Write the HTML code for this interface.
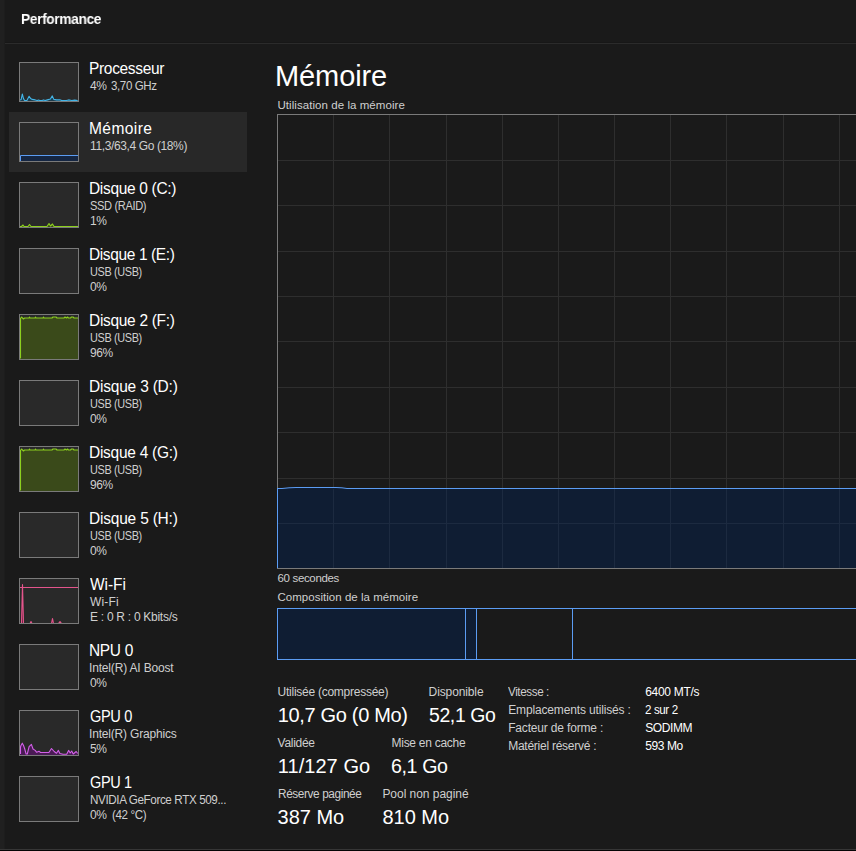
<!DOCTYPE html><html><head><meta charset="utf-8"><style>
html,body{margin:0;padding:0;width:856px;height:851px;overflow:hidden;background:#1a1a1a;}
body{position:relative;font-family:"Liberation Sans", sans-serif;}
.t{position:absolute;white-space:nowrap;line-height:1;}
.a{position:absolute;}
</style></head><body>

<div class="a" style="left:0;top:0;width:4px;height:851px;background:#202020"></div>
<div class="a" style="left:4px;top:0;width:1px;height:851px;background:#1d1d1d"></div>
<div class="a" style="left:5px;top:42px;width:851px;height:1px;background:#171717"></div>
<div class="a" style="left:5px;top:43px;width:851px;height:1px;background:#2b2b2b"></div>
<div class="a" style="left:0;top:849px;width:856px;height:1px;background:#363636"></div>
<div class="a" style="left:0;top:850px;width:856px;height:1px;background:#050505"></div>
<div class="a" style="left:9px;top:112px;width:238px;height:60px;background:#282828"></div>
<div class="a" style="left:19px;top:62px;width:58px;height:38px;border:1px solid #7a7a7a;background:#292929"></div><svg class="a" style="left:20px;top:63px" width="58" height="38" viewBox="0 0 58 38"><polygon points="0,38 0.0,37.1 1.2,36.4 2.3,31.0 3.5,35.6 4.6,37.5 6.9,37.5 9.1,33.3 10.7,35.6 12.2,36.4 15.2,36.9 17.1,37.5 18.6,37.1 19.8,37.6 22.0,37.6 23.6,36.9 25.1,37.6 27.4,36.9 30.4,36.0 32.3,32.9 33.8,36.4 36.5,36.9 40.3,36.9 41.8,37.6 46.4,37.6 48.6,36.9 51.7,37.5 54.7,37.1 57.7,37.5 57.7,38" fill="#1b3d4e"/><polyline points="0.0,37.1 1.2,36.4 2.3,31.0 3.5,35.6 4.6,37.5 6.9,37.5 9.1,33.3 10.7,35.6 12.2,36.4 15.2,36.9 17.1,37.5 18.6,37.1 19.8,37.6 22.0,37.6 23.6,36.9 25.1,37.6 27.4,36.9 30.4,36.0 32.3,32.9 33.8,36.4 36.5,36.9 40.3,36.9 41.8,37.6 46.4,37.6 48.6,36.9 51.7,37.5 54.7,37.1 57.7,37.5" fill="none" stroke="#42b4e6" stroke-width="1.1" stroke-linejoin="round"/></svg>
<div class="a" style="left:19px;top:122px;width:58px;height:38px;border:1px solid #7a7a7a;background:#292929"></div><svg class="a" style="left:20px;top:123px" width="58" height="38" viewBox="0 0 58 38"><rect x="0" y="32" width="58" height="6" fill="#152642"/><polyline points="0.5,38 0.5,32.5 58,32.5" fill="none" stroke="#5b9cf3" stroke-width="1"/></svg>
<div class="a" style="left:19px;top:182px;width:58px;height:44px;border:1px solid #7a7a7a;background:#292929"></div><svg class="a" style="left:20px;top:183px" width="58" height="44" viewBox="0 0 58 44"><polygon points="0,44 0.0,43.5 1.5,43.5 3.0,42.0 4.0,43.5 8.0,43.5 9.5,41.5 11.0,43.5 18.0,43.5 20.0,43.5 25.0,43.5 27.0,43.5 29.0,40.5 30.5,43.0 32.5,41.0 34.0,43.5 40.0,43.5 58.0,43.5 58.0,44" fill="#3a4a1a"/><polyline points="0.0,43.5 1.5,43.5 3.0,42.0 4.0,43.5 8.0,43.5 9.5,41.5 11.0,43.5 18.0,43.5 20.0,43.5 25.0,43.5 27.0,43.5 29.0,40.5 30.5,43.0 32.5,41.0 34.0,43.5 40.0,43.5 58.0,43.5" fill="none" stroke="#8ccf1e" stroke-width="1.1" stroke-linejoin="round"/></svg>
<div class="a" style="left:19px;top:248px;width:58px;height:44px;border:1px solid #7a7a7a;background:#292929"></div><svg class="a" style="left:20px;top:249px" width="58" height="44" viewBox="0 0 58 44"></svg>
<div class="a" style="left:19px;top:314px;width:58px;height:44px;border:1px solid #7a7a7a;background:#292929"></div><svg class="a" style="left:20px;top:315px" width="58" height="44" viewBox="0 0 58 44"><polygon points="0,44 0.5,43.5 0.5,3.5 1.5,2.0 3.5,4.0 4.5,3.0 9.0,3.0 9.5,2.0 10.0,3.0 15.0,3.0 15.5,2.0 16.0,3.0 23.0,3.0 23.5,2.0 24.0,3.0 32.0,3.0 33.0,2.0 36.0,2.0 37.0,3.0 44.0,3.0 45.0,2.0 46.5,3.0 47.5,2.0 48.5,3.0 50.5,3.0 51.5,2.0 53.0,2.0 54.0,3.0 58.0,3.0 58.0,44" fill="#3a4a1a"/><polyline points="0.5,43.5 0.5,3.5 1.5,2.0 3.5,4.0 4.5,3.0 9.0,3.0 9.5,2.0 10.0,3.0 15.0,3.0 15.5,2.0 16.0,3.0 23.0,3.0 23.5,2.0 24.0,3.0 32.0,3.0 33.0,2.0 36.0,2.0 37.0,3.0 44.0,3.0 45.0,2.0 46.5,3.0 47.5,2.0 48.5,3.0 50.5,3.0 51.5,2.0 53.0,2.0 54.0,3.0 58.0,3.0" fill="none" stroke="#8ccf1e" stroke-width="1.1" stroke-linejoin="round"/></svg>
<div class="a" style="left:19px;top:380px;width:58px;height:44px;border:1px solid #7a7a7a;background:#292929"></div><svg class="a" style="left:20px;top:381px" width="58" height="44" viewBox="0 0 58 44"></svg>
<div class="a" style="left:19px;top:446px;width:58px;height:44px;border:1px solid #7a7a7a;background:#292929"></div><svg class="a" style="left:20px;top:447px" width="58" height="44" viewBox="0 0 58 44"><polygon points="0,44 0.5,43.5 0.5,3.5 1.5,2.0 3.5,4.0 4.5,3.0 9.0,3.0 9.5,2.0 10.0,3.0 15.0,3.0 15.5,2.0 16.0,3.0 23.0,3.0 23.5,2.0 24.0,3.0 32.0,3.0 33.0,2.0 36.0,2.0 37.0,3.0 44.0,3.0 45.0,2.0 46.5,3.0 47.5,2.0 48.5,3.0 50.5,3.0 51.5,2.0 53.0,2.0 54.0,3.0 58.0,3.0 58.0,44" fill="#3a4a1a"/><polyline points="0.5,43.5 0.5,3.5 1.5,2.0 3.5,4.0 4.5,3.0 9.0,3.0 9.5,2.0 10.0,3.0 15.0,3.0 15.5,2.0 16.0,3.0 23.0,3.0 23.5,2.0 24.0,3.0 32.0,3.0 33.0,2.0 36.0,2.0 37.0,3.0 44.0,3.0 45.0,2.0 46.5,3.0 47.5,2.0 48.5,3.0 50.5,3.0 51.5,2.0 53.0,2.0 54.0,3.0 58.0,3.0" fill="none" stroke="#8ccf1e" stroke-width="1.1" stroke-linejoin="round"/></svg>
<div class="a" style="left:19px;top:512px;width:58px;height:44px;border:1px solid #7a7a7a;background:#292929"></div><svg class="a" style="left:20px;top:513px" width="58" height="44" viewBox="0 0 58 44"></svg>
<div class="a" style="left:19px;top:578px;width:58px;height:44px;border:1px solid #7a7a7a;background:#292929"></div><svg class="a" style="left:20px;top:579px" width="58" height="44" viewBox="0 0 58 44"><polyline points="0,8.5 58,8.5" fill="none" stroke="#e4558c" stroke-width="1"/><polygon points="0,44 0.0,44.5 1.5,44.5 2.5,5.5 3.5,44.5 4.5,44.5 10.0,44.5 11.0,42.5 12.0,44.5 31.5,44.5 32.5,39.5 33.5,44.5 38.5,44.5 40.0,42.5 41.5,44.5 58.0,44.5 58.0,44" fill="#5a2035"/><polyline points="0.0,44.5 1.5,44.5 2.5,5.5 3.5,44.5 4.5,44.5 10.0,44.5 11.0,42.5 12.0,44.5 31.5,44.5 32.5,39.5 33.5,44.5 38.5,44.5 40.0,42.5 41.5,44.5 58.0,44.5" fill="none" stroke="#e4558c" stroke-width="1.1" stroke-linejoin="round"/></svg>
<div class="a" style="left:19px;top:644px;width:58px;height:44px;border:1px solid #7a7a7a;background:#292929"></div><svg class="a" style="left:20px;top:645px" width="58" height="44" viewBox="0 0 58 44"></svg>
<div class="a" style="left:19px;top:710px;width:58px;height:44px;border:1px solid #7a7a7a;background:#292929"></div><svg class="a" style="left:20px;top:711px" width="58" height="44" viewBox="0 0 58 44"><polygon points="0,44 0.5,43.0 0.5,36.0 1.0,34.5 2.3,32.2 3.5,34.5 4.6,37.5 6.1,43.0 7.3,43.0 9.1,35.6 11.4,33.4 13.0,38.0 15.2,39.4 16.7,41.3 19.0,40.2 20.5,41.5 28.9,41.5 31.5,37.5 34.2,40.5 36.5,42.2 38.4,39.4 39.9,42.5 43.0,43.2 46.7,43.2 48.6,39.4 50.2,42.0 51.7,40.0 53.2,43.0 56.2,40.5 57.7,42.5 57.7,44" fill="#4a1a55"/><polyline points="0.5,43.0 0.5,36.0 1.0,34.5 2.3,32.2 3.5,34.5 4.6,37.5 6.1,43.0 7.3,43.0 9.1,35.6 11.4,33.4 13.0,38.0 15.2,39.4 16.7,41.3 19.0,40.2 20.5,41.5 28.9,41.5 31.5,37.5 34.2,40.5 36.5,42.2 38.4,39.4 39.9,42.5 43.0,43.2 46.7,43.2 48.6,39.4 50.2,42.0 51.7,40.0 53.2,43.0 56.2,40.5 57.7,42.5" fill="none" stroke="#d260e8" stroke-width="1.1" stroke-linejoin="round"/></svg>
<div class="a" style="left:19px;top:776px;width:58px;height:44px;border:1px solid #7a7a7a;background:#292929"></div><svg class="a" style="left:20px;top:777px" width="58" height="44" viewBox="0 0 58 44"></svg>
<svg class="a" style="left:0;top:0" width="856" height="851" viewBox="0 0 856 851" shape-rendering="crispEdges"><rect x="278" y="160" width="578" height="1" fill="#2e2e2e"/><rect x="278" y="205" width="578" height="1" fill="#2e2e2e"/><rect x="278" y="251" width="578" height="1" fill="#2e2e2e"/><rect x="278" y="296" width="578" height="1" fill="#2e2e2e"/><rect x="278" y="341" width="578" height="1" fill="#2e2e2e"/><rect x="278" y="387" width="578" height="1" fill="#2e2e2e"/><rect x="278" y="432" width="578" height="1" fill="#2e2e2e"/><rect x="278" y="478" width="578" height="1" fill="#2e2e2e"/><rect x="278" y="523" width="578" height="1" fill="#2e2e2e"/><rect x="333" y="115" width="1" height="453" fill="#2e2e2e"/><rect x="389" y="115" width="1" height="453" fill="#2e2e2e"/><rect x="446" y="115" width="1" height="453" fill="#2e2e2e"/><rect x="502" y="115" width="1" height="453" fill="#2e2e2e"/><rect x="558" y="115" width="1" height="453" fill="#2e2e2e"/><rect x="614" y="115" width="1" height="453" fill="#2e2e2e"/><rect x="670" y="115" width="1" height="453" fill="#2e2e2e"/><rect x="726" y="115" width="1" height="453" fill="#2e2e2e"/><rect x="783" y="115" width="1" height="453" fill="#2e2e2e"/><rect x="839" y="115" width="1" height="453" fill="#2e2e2e"/></svg>
<svg class="a" style="left:0;top:0" width="856" height="851" viewBox="0 0 856 851"><polygon points="277,568 277.5,488.5 282,488.5 289,487.8 296,487.5 336,487.5 342,487.8 347,488.5 856,488.5 856,568" fill="#0f1d33"/></svg>
<svg class="a" style="left:0;top:0" width="856" height="851" viewBox="0 0 856 851" shape-rendering="crispEdges"><rect x="278" y="523" width="578" height="1" fill="#1c2a40"/><rect x="333" y="489" width="1" height="79" fill="#1c2a40"/><rect x="389" y="489" width="1" height="79" fill="#1c2a40"/><rect x="446" y="489" width="1" height="79" fill="#1c2a40"/><rect x="502" y="489" width="1" height="79" fill="#1c2a40"/><rect x="558" y="489" width="1" height="79" fill="#1c2a40"/><rect x="614" y="489" width="1" height="79" fill="#1c2a40"/><rect x="670" y="489" width="1" height="79" fill="#1c2a40"/><rect x="726" y="489" width="1" height="79" fill="#1c2a40"/><rect x="783" y="489" width="1" height="79" fill="#1c2a40"/><rect x="839" y="489" width="1" height="79" fill="#1c2a40"/><rect x="277" y="114" width="579" height="1" fill="#7a7a7a"/><rect x="277" y="114" width="1" height="374" fill="#7a7a7a"/><rect x="277" y="488" width="1" height="80" fill="#5b9cf3"/><rect x="277" y="568" width="579" height="1" fill="#7a7a7a"/></svg>
<svg class="a" style="left:0;top:0" width="856" height="851" viewBox="0 0 856 851"><polyline points="277.5,488.5 282,488.5 289,487.8 296,487.5 336,487.5 342,487.8 347,488.5 856,488.5" fill="none" stroke="#5b9cf3" stroke-width="1"/></svg>
<div class="a" style="left:277px;top:608px;width:579px;height:52px;box-sizing:border-box;border:1px solid #5b9cf3;border-right:none;"></div>
<div class="a" style="left:278px;top:609px;width:187px;height:50px;background:#0f1d33"></div>
<div class="a" style="left:466px;top:609px;width:10px;height:50px;background:#0f1d33"></div>
<div class="a" style="left:465px;top:609px;width:1px;height:50px;background:#5b9cf3"></div>
<div class="a" style="left:476px;top:609px;width:1px;height:50px;background:#5b9cf3"></div>
<div class="a" style="left:572px;top:609px;width:1px;height:50px;background:#5b9cf3"></div>
<div class="t" style="left:21.00px;top:12px;font-size:14.5px;color:#ffffff;font-weight:700;letter-spacing:-0.400px;transform:scale(0.9505,1.0);transform-origin:0 12px;will-change:transform">Performance</div>
<div class="t" style="left:89.00px;top:61px;font-size:15.5px;color:#ffffff;font-weight:400;letter-spacing:-0.326px;transform:scale(1.0000,1.07);transform-origin:0 13px">Processeur</div>
<div class="t" style="left:89.00px;top:121px;font-size:15.5px;color:#ffffff;font-weight:400;letter-spacing:0.400px;transform:scale(1.0038,1.07);transform-origin:0 13px">Mémoire</div>
<div class="t" style="left:90.00px;top:140px;font-size:12px;color:#cfcfcf;font-weight:400;letter-spacing:-0.379px">11,3/63,4 Go (18%)</div>
<div class="t" style="left:89.00px;top:181px;font-size:15.5px;color:#ffffff;font-weight:400;letter-spacing:-0.320px;transform:scale(1.0000,1.07);transform-origin:0 13px">Disque 0 (C:)</div>
<div class="t" style="left:90.00px;top:200px;font-size:12px;color:#cfcfcf;font-weight:400;letter-spacing:-0.400px;transform:scale(0.9251,1.0);transform-origin:0 10px">SSD (RAID)</div>
<div class="t" style="left:90.00px;top:215px;font-size:12px;color:#cfcfcf;font-weight:400;letter-spacing:-0.400px">1%</div>
<div class="t" style="left:89.00px;top:247px;font-size:15.5px;color:#ffffff;font-weight:400;letter-spacing:-0.382px;transform:scale(1.0000,1.07);transform-origin:0 13px">Disque 1 (E:)</div>
<div class="t" style="left:90.00px;top:266px;font-size:12px;color:#cfcfcf;font-weight:400;letter-spacing:-0.400px;transform:scale(0.9082,1.0);transform-origin:0 10px">USB (USB)</div>
<div class="t" style="left:90.00px;top:281px;font-size:12px;color:#cfcfcf;font-weight:400;letter-spacing:-0.400px">0%</div>
<div class="t" style="left:89.00px;top:313px;font-size:15.5px;color:#ffffff;font-weight:400;letter-spacing:-0.310px;transform:scale(1.0000,1.07);transform-origin:0 13px">Disque 2 (F:)</div>
<div class="t" style="left:90.00px;top:332px;font-size:12px;color:#cfcfcf;font-weight:400;letter-spacing:-0.400px;transform:scale(0.9082,1.0);transform-origin:0 10px">USB (USB)</div>
<div class="t" style="left:90.00px;top:347px;font-size:12px;color:#cfcfcf;font-weight:400;letter-spacing:-0.400px">96%</div>
<div class="t" style="left:89.00px;top:379px;font-size:15.5px;color:#ffffff;font-weight:400;letter-spacing:-0.204px;transform:scale(1.0000,1.07);transform-origin:0 13px">Disque 3 (D:)</div>
<div class="t" style="left:90.00px;top:398px;font-size:12px;color:#cfcfcf;font-weight:400;letter-spacing:-0.400px;transform:scale(0.9082,1.0);transform-origin:0 10px">USB (USB)</div>
<div class="t" style="left:90.00px;top:413px;font-size:12px;color:#cfcfcf;font-weight:400;letter-spacing:-0.400px">0%</div>
<div class="t" style="left:89.00px;top:445px;font-size:15.5px;color:#ffffff;font-weight:400;letter-spacing:-0.275px;transform:scale(1.0000,1.07);transform-origin:0 13px">Disque 4 (G:)</div>
<div class="t" style="left:90.00px;top:464px;font-size:12px;color:#cfcfcf;font-weight:400;letter-spacing:-0.400px;transform:scale(0.9082,1.0);transform-origin:0 10px">USB (USB)</div>
<div class="t" style="left:90.00px;top:479px;font-size:12px;color:#cfcfcf;font-weight:400;letter-spacing:-0.400px">96%</div>
<div class="t" style="left:89.00px;top:511px;font-size:15.5px;color:#ffffff;font-weight:400;letter-spacing:-0.204px;transform:scale(1.0000,1.07);transform-origin:0 13px">Disque 5 (H:)</div>
<div class="t" style="left:90.00px;top:530px;font-size:12px;color:#cfcfcf;font-weight:400;letter-spacing:-0.400px;transform:scale(0.9082,1.0);transform-origin:0 10px">USB (USB)</div>
<div class="t" style="left:90.00px;top:545px;font-size:12px;color:#cfcfcf;font-weight:400;letter-spacing:-0.400px">0%</div>
<div class="t" style="left:90.00px;top:577px;font-size:15.5px;color:#ffffff;font-weight:400;letter-spacing:-0.051px;transform:scale(1.0000,1.07);transform-origin:0 13px">Wi-Fi</div>
<div class="t" style="left:90.00px;top:596px;font-size:12px;color:#cfcfcf;font-weight:400;letter-spacing:0.145px">Wi-Fi</div>
<div class="t" style="left:90.00px;top:611px;font-size:12px;color:#cfcfcf;font-weight:400;letter-spacing:-0.278px">E : 0 R : 0 Kbits/s</div>
<div class="t" style="left:89.00px;top:643px;font-size:15.5px;color:#ffffff;font-weight:400;letter-spacing:-0.333px;transform:scale(1.0000,1.07);transform-origin:0 13px">NPU 0</div>
<div class="t" style="left:89.00px;top:662px;font-size:12px;color:#cfcfcf;font-weight:400;letter-spacing:-0.169px">Intel(R) AI Boost</div>
<div class="t" style="left:90.00px;top:677px;font-size:12px;color:#cfcfcf;font-weight:400;letter-spacing:-0.400px">0%</div>
<div class="t" style="left:90.00px;top:709px;font-size:15.5px;color:#ffffff;font-weight:400;letter-spacing:-0.400px;transform:scale(0.9427,1.07);transform-origin:0 13px">GPU 0</div>
<div class="t" style="left:89.00px;top:728px;font-size:12px;color:#cfcfcf;font-weight:400;letter-spacing:-0.181px">Intel(R) Graphics</div>
<div class="t" style="left:90.00px;top:743px;font-size:12px;color:#cfcfcf;font-weight:400;letter-spacing:-0.400px">5%</div>
<div class="t" style="left:90.00px;top:775px;font-size:15.5px;color:#ffffff;font-weight:400;letter-spacing:-0.400px;transform:scale(0.9369,1.07);transform-origin:0 13px">GPU 1</div>
<div class="t" style="left:90.00px;top:794px;font-size:12px;color:#cfcfcf;font-weight:400;letter-spacing:-0.400px;transform:scale(0.9725,1.0);transform-origin:0 10px">NVIDIA GeForce RTX 509...</div>
<div class="t" style="left:90.00px;top:80px;font-size:12px;color:#cfcfcf;font-weight:400;letter-spacing:-0.400px">4%</div>
<div class="t" style="left:111.00px;top:80px;font-size:12px;color:#cfcfcf;font-weight:400;letter-spacing:-0.400px;transform:scale(0.9626,1.0);transform-origin:0 10px">3,70 GHz</div>
<div class="t" style="left:90.00px;top:809px;font-size:12px;color:#cfcfcf;font-weight:400;letter-spacing:-0.400px">0%</div>
<div class="t" style="left:111.90px;top:809px;font-size:12px;color:#cfcfcf;font-weight:400;letter-spacing:-0.400px;transform:scale(0.9680,1.0);transform-origin:0 10px">(42 °C)</div>
<div class="t" style="left:275.00px;top:62px;font-size:29px;color:#ffffff;font-weight:400;letter-spacing:-0.095px">Mémoire</div>
<div class="t" style="left:277.50px;top:100px;font-size:11.5px;color:#cfcfcf;font-weight:400;letter-spacing:0.058px">Utilisation de la mémoire</div>
<div class="t" style="left:277.50px;top:573px;font-size:11.5px;color:#cfcfcf;font-weight:400;letter-spacing:-0.337px">60 secondes</div>
<div class="t" style="left:277.50px;top:592px;font-size:11.5px;color:#cfcfcf;font-weight:400;letter-spacing:0.026px">Composition de la mémoire</div>
<div class="t" style="left:277.60px;top:686px;font-size:12px;color:#cfcfcf;font-weight:400;letter-spacing:-0.257px">Utilisée (compressée)</div>
<div class="t" style="left:277.80px;top:705px;font-size:20px;color:#ffffff;font-weight:400;letter-spacing:-0.334px">10,7 Go (0 Mo)</div>
<div class="t" style="left:428.60px;top:686px;font-size:12px;color:#cfcfcf;font-weight:400;letter-spacing:-0.118px">Disponible</div>
<div class="t" style="left:428.60px;top:705px;font-size:20px;color:#ffffff;font-weight:400;letter-spacing:-0.400px;transform:scale(0.9732,1.0);transform-origin:0 17px">52,1 Go</div>
<div class="t" style="left:277.60px;top:737px;font-size:12px;color:#cfcfcf;font-weight:400;letter-spacing:-0.294px">Validée</div>
<div class="t" style="left:277.80px;top:756px;font-size:20px;color:#ffffff;font-weight:400;letter-spacing:0.050px">11/127 Go</div>
<div class="t" style="left:391.50px;top:737px;font-size:12px;color:#cfcfcf;font-weight:400;letter-spacing:-0.267px">Mise en cache</div>
<div class="t" style="left:390.52px;top:756px;font-size:20px;color:#ffffff;font-weight:400;letter-spacing:-0.400px;transform:scale(0.9821,1.0);transform-origin:0 17px">6,1 Go</div>
<div class="t" style="left:277.60px;top:788px;font-size:12px;color:#cfcfcf;font-weight:400;letter-spacing:-0.400px;transform:scale(0.9853,1.0);transform-origin:0 10px">Réserve paginée</div>
<div class="t" style="left:277.60px;top:807px;font-size:20px;color:#ffffff;font-weight:400;letter-spacing:-0.017px">387 Mo</div>
<div class="t" style="left:382.40px;top:788px;font-size:12px;color:#cfcfcf;font-weight:400;letter-spacing:-0.033px">Pool non paginé</div>
<div class="t" style="left:382.40px;top:807px;font-size:20px;color:#ffffff;font-weight:400;letter-spacing:0.003px">810 Mo</div>
<div class="t" style="left:508.20px;top:686px;font-size:12px;color:#cfcfcf;font-weight:400;letter-spacing:-0.400px;transform:scale(0.9700,1.0);transform-origin:0 10px">Vitesse :</div>
<div class="t" style="left:645.20px;top:686px;font-size:12px;color:#ffffff;font-weight:400;letter-spacing:-0.286px">6400 MT/s</div>
<div class="t" style="left:508.20px;top:704px;font-size:12px;color:#cfcfcf;font-weight:400;letter-spacing:-0.151px">Emplacements utilisés :</div>
<div class="t" style="left:645.20px;top:704px;font-size:12px;color:#ffffff;font-weight:400;letter-spacing:-0.400px;transform:scale(0.9650,1.0);transform-origin:0 10px">2 sur 2</div>
<div class="t" style="left:508.20px;top:722px;font-size:12px;color:#cfcfcf;font-weight:400;letter-spacing:-0.171px">Facteur de forme :</div>
<div class="t" style="left:645.20px;top:722px;font-size:12px;color:#ffffff;font-weight:400;letter-spacing:-0.387px">SODIMM</div>
<div class="t" style="left:508.20px;top:740px;font-size:12px;color:#cfcfcf;font-weight:400;letter-spacing:-0.251px">Matériel réservé :</div>
<div class="t" style="left:645.20px;top:740px;font-size:12px;color:#ffffff;font-weight:400;letter-spacing:-0.400px">593 Mo</div>
</body></html>
